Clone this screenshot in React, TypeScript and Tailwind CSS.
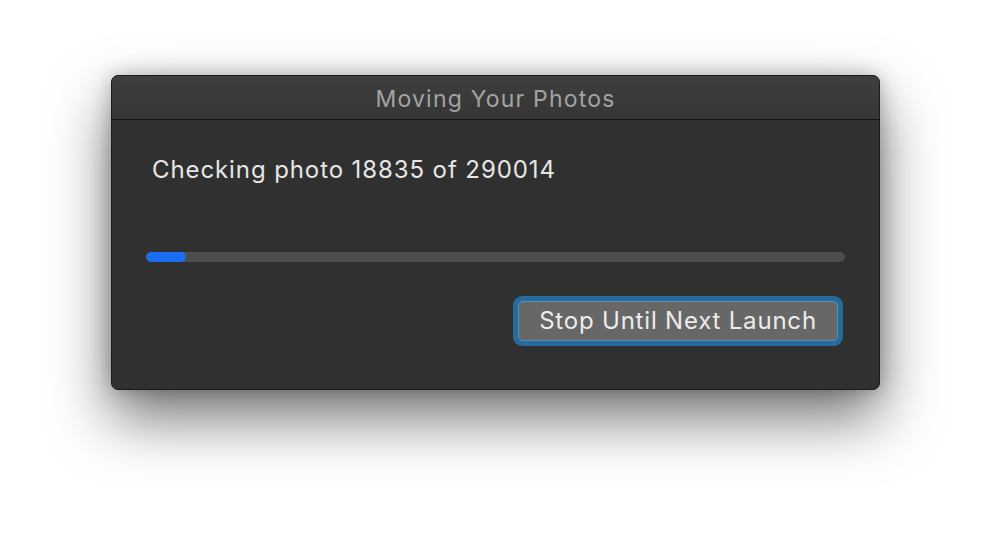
export default function App() {
  const checked = 18835;
  const total = 290014;
  return (
    <div
      className="flex h-[538px] w-[992px] items-start bg-white pl-[111px] pt-[75px]"
      style={{ fontFamily: "Inter, 'Noto Sans', sans-serif" }}
    >
      <div className="flex h-[315px] w-[769px] flex-col overflow-hidden rounded-[7px] border border-[#1b1b1b] bg-[#303030] shadow-[0_28px_60px_rgba(0,0,0,0.55),0_0_20px_rgba(0,0,0,0.25)]">
        <div className="flex h-[44px] items-center justify-center border-b border-[#141414] bg-gradient-to-b from-[#3e3e3e] to-[#363636] pt-[3px] text-[23px] tracking-[1.2px] text-[#a3a3a3]">
          Moving Your Photos
        </div>
        <div className="flex flex-1 flex-col px-[34px]">
          <div className="mt-[32px] pl-[6px] text-[24px] tracking-[0.9px] text-[#e6e6e6]">
            Checking photo {checked} of {total}
          </div>
          <div className="mt-[64px] h-[10px] w-full overflow-hidden rounded-full bg-[#4d4d4d]">
            <div className="h-full rounded-full bg-[#1b6ef3]" style={{ width: "40px" }} />
          </div>
          <div className="mt-[34px] flex justify-end pr-[2px]">
            <div className="rounded-[9px] bg-[#276b9e] p-[5px]">
              <button className="flex h-[40px] w-[320px] items-center justify-center rounded-[5px] border border-[#5a8fb8] bg-[#676767] text-[24px] tracking-[0.8px] text-[#ececec]">
                Stop Until Next Launch
              </button>
            </div>
          </div>
        </div>
      </div>
    </div>
  );
}
